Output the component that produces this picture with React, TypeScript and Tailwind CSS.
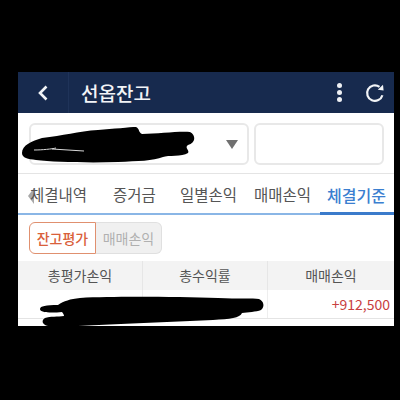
const font = { fontFamily: '"Noto Sans CJK KR", sans-serif' };

export default function App() {
  return (
    <div className="w-[400px] h-[400px] bg-black pt-[72px] pl-[18px]" style={font}>
      <div className="relative w-[376px] h-[254px] bg-white overflow-hidden">
        {/* 헤더 */}
        <div className="flex items-center h-[41px] bg-[#172a4e] text-white">
          <div className="flex justify-center items-center w-[51px] h-full border-r border-[#1f3359]">
            <svg width="12" height="18" viewBox="0 0 12 18" fill="none" stroke="#f2f4f7" strokeWidth="2.6">
              <path d="M9.5 2.5 3 9l6.5 6.5" />
            </svg>
          </div>
          <h1 className="flex-1 pl-[12px] text-[19px] font-medium leading-none text-[#f2f4f7]">선옵잔고</h1>
          <div className="flex flex-col gap-[2px] mr-[23px]">
            <span className="w-[5px] h-[5px] rounded-full bg-[#eef0f4]" />
            <span className="w-[5px] h-[5px] rounded-full bg-[#eef0f4]" />
            <span className="w-[5px] h-[5px] rounded-full bg-[#eef0f4]" />
          </div>
          <svg width="20" height="20" viewBox="0 0 20 20" fill="none" className="mr-[9px]">
            <path d="M17.4 12.2A7.8 7.8 0 1 1 14.5 3.8" stroke="#f2f4f7" strokeWidth="2.2" />
            <path d="M12.8 6.8 18.6 7.6 18 1.8Z" fill="#f2f4f7" />
          </svg>
        </div>

        {/* 계좌 선택 */}
        <div className="flex gap-[5px] h-[61px] pt-[10px] pl-[11px] border-b border-[#e4e4e4]">
          <div className="flex justify-end items-center w-[220px] h-[42px] pr-[9px] rounded-[6px] border-2 border-[#e8e8e8]">
            <span className="w-0 h-0 border-x-[6px] border-x-transparent border-t-[9px] border-t-[#707070]" />
          </div>
          <div className="w-[130px] h-[42px] rounded-[6px] border-2 border-[#e8e8e8]" />
        </div>

        {/* 탭 스크롤 표시 */}
        <div className="absolute left-[10px] top-[116px] w-0 h-0 border-y-[8px] border-y-transparent border-r-[6px] border-r-[#a8a8a8]" />

        {/* 탭 */}
        <div className="relative flex items-center h-[41px] pl-[12px] pt-[3px] border-b-2 border-[#8ab6e6] text-[15.5px] leading-none whitespace-nowrap text-[#555]">
          <span className="w-[83px]">체결내역</span>
          <span className="w-[67px]">증거금</span>
          <span className="w-[74px]">일별손익</span>
          <span className="w-[73px]">매매손익</span>
          <span className="text-[16px] font-medium text-[#3b7fd0]">체결기준</span>
        </div>
        <div className="absolute left-[302px] top-[140px] w-[74px] h-[3px] bg-[#3b7bcb]" />

        {/* 구분 버튼 */}
        <div className="flex h-[46px] pt-[7px] pl-[11px] text-[14px] leading-none">
          <div className="flex justify-center items-center w-[67px] h-[32px] rounded-l-[6px] border border-[#e0906f] text-[#d9603a] font-medium">
            잔고평가
          </div>
          <div className="flex justify-center items-center w-[66px] h-[32px] rounded-r-[6px] border border-l-0 border-[#e0e0e0] bg-[#f0f0f0] text-[#b0b0b0]">
            매매손익
          </div>
        </div>

        {/* 표 */}
        <div className="grid grid-cols-[125px_125px_126px] h-[29px] bg-[#f3f3f3] text-[14px] text-[#555]">
          <div className="flex justify-center items-center border-r border-[#e6e6e6]">총평가손익</div>
          <div className="flex justify-center items-center border-r border-[#e6e6e6]">총수익률</div>
          <div className="flex justify-center items-center">매매손익</div>
        </div>
        <div className="grid grid-cols-[125px_125px_126px] h-[29px] border-b border-[#e4e4e4] text-[14px]">
          <div className="border-r border-[#eeeeee]" />
          <div className="border-r border-[#eeeeee]" />
          <div className="flex justify-end items-center pr-[4px] text-[#c8403f]">+912,500</div>
        </div>

        {/* 가림 낙서 */}
        <svg className="absolute left-0 top-0" width="376" height="254" viewBox="0 0 376 254">
          <path
            d="M4 81C4 73 14 69 24 66C45 64 60 59 80 58C95 57 112 55 118 55C122 57 120 60 124 62C140 62 160 59 172 60C178 63 178 71 170 73C166 76 172 78 170 81C164 85 150 83 145 85C135 89 120 89 100 90C70 91 35 90 18 88C10 87 4 86 4 81Z"
            fill="#000"
          />
          <path d="M16 78C24 78 34 77 38 76M34 77L66 79" stroke="#d8d8d8" strokeWidth="1" fill="none" />
          <path
            d="M22 237C22 234 28 233 40 233C46 229 52 227 62 226C100 224 160 225 200 226C220 227 235 226 241 227C246 229 247 235 243 238C238 240 230 240 224 241C222 246 212 247 195 248C150 250 100 252 60 254L30 254C24 253 23 248 27 246C32 244 40 245 46 244C46 243 45 241 44 240C34 241 22 241 22 237Z"
            fill="#000"
          />
        </svg>
      </div>
    </div>
  );
}
